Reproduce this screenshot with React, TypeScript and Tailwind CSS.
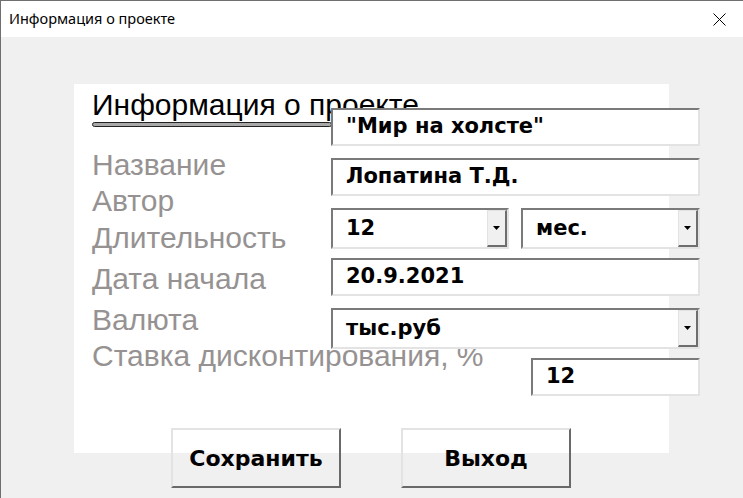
import React from 'react';

const labelFont = { fontFamily: '"Liberation Sans", Arial, sans-serif' };
const fieldFont = { fontFamily: '"DejaVu Sans", Verdana, sans-serif' };

function TextField({ value, className = '' }: { value: string; className?: string }) {
  return (
    <div
      className={`h-[38px] bg-white border-2 border-t-[#7a7a7a] border-l-[#7a7a7a] border-b-[#e3e3e3] border-r-[#e3e3e3] flex items-center pl-[13px] text-[21px] font-bold text-black ${className}`}
      style={fieldFont}
    >
      {value}
    </div>
  );
}

function Combo({ value, className = '' }: { value: string; className?: string }) {
  return (
    <div
      className={`h-[41px] bg-white border-2 border-t-[#7a7a7a] border-l-[#7a7a7a] border-b-[#e3e3e3] border-r-[#e3e3e3] flex items-stretch ${className}`}
    >
      <div className="flex-1 flex items-center pl-[13px] text-[21px] font-bold text-black" style={fieldFont}>
        {value}
      </div>
      <div className="w-[20px] bg-[#f0f0f0] border-l border-t border-l-[#e3e3e3] border-t-[#e3e3e3] border-r-2 border-b-2 border-r-[#6e6e6e] border-b-[#6e6e6e] flex items-center justify-center">
        <svg width="7" height="4" viewBox="0 0 7 4">
          <path d="M0 0h7L3.5 4z" fill="#000" />
        </svg>
      </div>
    </div>
  );
}

function FormButton({ label }: { label: string }) {
  return (
    <button
      className="w-[170px] h-[60px] bg-transparent border-2 border-t-[#e3e3e3] border-l-[#e3e3e3] border-b-[#696969] border-r-[#696969] text-[22px] font-bold text-black flex items-center justify-center"
      style={fieldFont}
    >
      {label}
    </button>
  );
}

export default function App() {
  return (
    <div className="w-[743px] h-[498px] overflow-hidden bg-[#f0f0f0] border-l border-t border-[#6f6f6f]">
      {/* Title bar */}
      <div className="h-[36px] bg-white flex items-center justify-between pl-[8px] pr-[17px]">
        <span className="text-[14.5px] text-black" style={{ fontFamily: '"Noto Sans", "Segoe UI", sans-serif' }}>
          Информация о проекте
        </span>
        <svg width="13" height="13" viewBox="0 0 13 13">
          <path d="M0.5 0.5L12.5 12.5M12.5 0.5L0.5 12.5" stroke="#000" strokeWidth="1" />
        </svg>
      </div>

      {/* Body */}
      <div className="relative pt-[47px] pl-[73px]">
        <div className="w-[595px] h-[369px] bg-white pl-[18px] pt-[6px]" style={labelFont}>
          <div className="text-[30px] leading-[30px] text-black whitespace-nowrap">Информация о проекте</div>
          <div className="mt-[2px] w-[240px] h-[5px] rounded-full border border-[#222] bg-[#a8a8a8]" />
          <div className="flex flex-col text-[30px] leading-[30px] text-[#969292] whitespace-nowrap">
            <div className="mt-[23px]">Название</div>
            <div className="mt-[6px]">Автор</div>
            <div className="mt-[7px]">Длительность</div>
            <div className="mt-[11px]">Дата начала</div>
            <div className="mt-[11px]">Валюта</div>
            <div className="mt-[6px]">Ставка дисконтирования, %</div>
          </div>
        </div>

        {/* Fields lie over the panel title */}
        <div className="absolute left-[330px] top-[71px] w-[369px] flex flex-col">
          <TextField value={'"Мир на холсте"'} />
          <TextField value="Лопатина Т.Д." className="mt-[12px]" />
          <div className="mt-[12px] flex gap-[12px]">
            <Combo value="12" className="w-[178px]" />
            <Combo value="мес." className="w-[179px]" />
          </div>
          <TextField value="20.9.2021" className="mt-[9px]" />
          <Combo value="тыс.руб" className="mt-[12px]" />
          <TextField value="12" className="mt-[9px] ml-[200px] w-[169px]" />
        </div>

        <div className="mt-[-25px] ml-[97px] flex gap-[60px]">
          <FormButton label="Сохранить" />
          <FormButton label="Выход" />
        </div>
      </div>
    </div>
  );
}
